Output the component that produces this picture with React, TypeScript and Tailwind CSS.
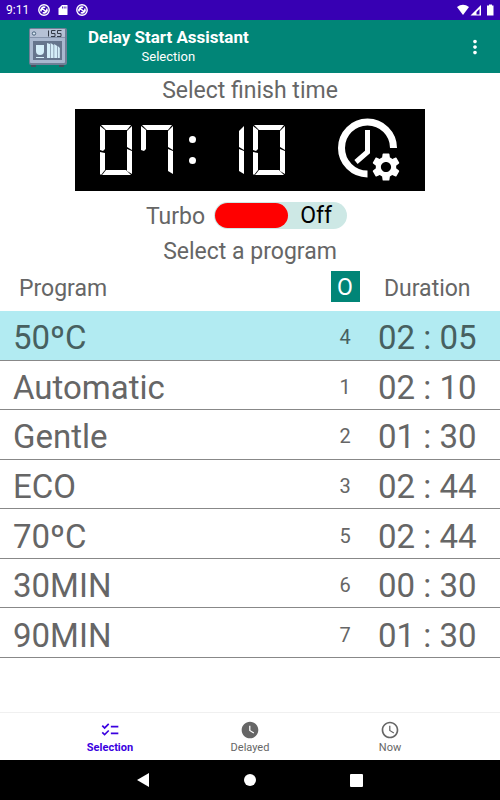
import React, { useState } from 'react';
import { MdSettings, MdChecklist, MdWatchLater, MdAccessTime, MdMoreVert } from 'react-icons/md';

interface Program {
    id: number;
    name: string;
    duration: string;
}

const PROGRAMS: Program[] = [
    { id: 4, name: '50ºC', duration: '02 : 05' },
    { id: 1, name: 'Automatic', duration: '02 : 10' },
    { id: 2, name: 'Gentle', duration: '01 : 30' },
    { id: 3, name: 'ECO', duration: '02 : 44' },
    { id: 5, name: '70ºC', duration: '02 : 44' },
    { id: 6, name: '30MIN', duration: '00 : 30' },
    { id: 7, name: '90MIN', duration: '01 : 30' },
];

const TABS = [
    { label: 'Selection', icon: MdChecklist },
    { label: 'Delayed', icon: MdWatchLater },
    { label: 'Now', icon: MdAccessTime },
];

// Seven segment display: every segment fills the digit cell and is clipped to its own bar
const SEGMENTS: Record<string, string> = {
    a: '[clip-path:polygon(1px_0,31px_0,27px_5px,6px_5px)]',
    b: '[clip-path:polygon(32px_1px,32px_25px,27px_22px,27px_6px)]',
    c: '[clip-path:polygon(32px_26px,32px_49px,27px_46px,27px_24px)]',
    d: '[clip-path:polygon(6px_45px,26px_45px,31px_50px,2px_50px)]',
    e: '[clip-path:polygon(0_27px,5px_28px,5px_45px,1px_50px,0_49px)]',
    f: '[clip-path:polygon(0_1px,5px_5px,5px_24px,3px_26px,0_25px)]',
    g: '[clip-path:polygon(3px_25px,6px_23px,26px_23px,29px_25px,26px_27px,6px_27px)]',
};

const DIGITS: Record<string, string> = {
    '0': 'abcdef', '1': 'bc', '2': 'abged', '3': 'abgcd', '4': 'fgbc',
    '5': 'afgcd', '6': 'afgecd', '7': 'fabc', '8': 'abcdefg', '9': 'abcdfg',
};

const Digit: React.FC<{ value: string }> = ({ value }) => (
    <span className="grid h-[50px] w-8">
        {DIGITS[value].split('').map((s) => (
            <span key={s} className={`col-start-1 row-start-1 bg-white ${SEGMENTS[s]}`} />
        ))}
    </span>
);

const FinishTime: React.FC<{ hours: string; minutes: string }> = ({ hours, minutes }) => (
    <span className="flex items-center" role="img" aria-label={`${hours}:${minutes}`}>
        <span className="flex gap-[9px]">
            {hours.split('').map((d, i) => <Digit key={i} value={d} />)}
        </span>
        <span className="mx-4 flex flex-col gap-[14px]">
            <span className="size-[7px] rounded-full bg-white" />
            <span className="size-[7px] rounded-full bg-white" />
        </span>
        <span className="flex gap-[9px]">
            {minutes.split('').map((d, i) => <Digit key={i} value={d} />)}
        </span>
    </span>
);

const ClockGear: React.FC = () => (
    <svg className="h-[66px] w-[66px]" viewBox="0 0 66 66" fill="none" stroke="#fff" aria-hidden="true">
        <path d="M55.500 31A26 26 0 1 0 29.500 57" strokeWidth="7" />
        <path d="M29.500 13V35L18 45" strokeWidth="5" />
        <MdSettings x="31" y="33" size={34} fill="#fff" stroke="none" />
    </svg>
);

const DishwasherLogo: React.FC = () => (
    <svg className="size-10" viewBox="0 0 40 40" aria-hidden="true">
        <path d="M3 37h5v3H3zM31 37h5v3h-5z" fill="#46505f" />
        <rect x="1" y="1" width="38" height="37" rx="2" fill="#6f7f97" />
        <rect x="2" y="2" width="35" height="34" rx="1" fill="#a9b8cf" />
        <rect x="2" y="2" width="35" height="8" rx="1" fill="#b5c1d5" />
        <path d="M2 10.500h35" stroke="#8594ac" />
        <circle cx="6" cy="6.500" r="1.700" fill="#dcebf5" stroke="#46607a" />
        <rect x="5" y="14" width="29" height="19" fill="#66758d" />
        <path d="M8 18h8v6a4 4 0 0 1-8 0z" fill="#d5eef9" />
        <path d="M8 30.500h8" stroke="#d5eef9" />
        <path d="M19 16l3 1v14h-3zM22.600 16l3 2v13h-3zM26.200 17l3 2v12h-3zM29.800 19l2 2v10h-2z" fill="#d5eef9" />
        <path d="M20.500 3.500v6M23.500 3.500h4M23.500 3.500v3h3.500v3h-4M29.500 3.500h4M29.500 3.500v3h3.500v3h-4" fill="none" stroke="#333b48" />
    </svg>
);

const BlockedIcon: React.FC = () => (
    <svg className="size-3" viewBox="0 0 12 12" fill="none" stroke="#fff" aria-hidden="true">
        <circle cx="6" cy="6" r="5.200" strokeWidth="1.400" />
        <path d="M3.300 7.500a3 3 0 0 1 4-4M8.700 4.500a3 3 0 0 1-4 4M3.500 4l5 4" strokeWidth="1.600" />
    </svg>
);

const StatusBar: React.FC = () => (
    <div className="flex h-5 items-center bg-[#3700b3] px-[6px] text-xs text-white">
        <span>9:11</span>
        <span className="ml-[9px] flex items-center gap-2">
            <BlockedIcon />
            <svg className="h-3 w-[10px]" viewBox="0 0 10 12" fill="#fff" aria-hidden="true">
                <path d="M4 1h5q.5 0 .5.500V10.500q0 .5-.5.500H1q-.5 0-.5-.500V4.500z" />
                <path d="M4.500 2.500v2M6.200 2.500v2M7.900 2.500v2" stroke="#3700b3" strokeWidth="0.800" />
            </svg>
            <BlockedIcon />
        </span>
        <svg className="ml-auto h-3 w-[38px]" viewBox="0 0 38 12" fill="#fff" aria-hidden="true">
            <path d="M1 3Q7-1.500 13 3L7 11z" />
            <path d="M14.500 11.500L25 1V11.500z" />
            <path d="M20.500 8v2.500h3V5z" fill="#3700b3" />
            <path d="M33 .500h3v1h1.500V11.500h-6.500V1.500h2z" />
        </svg>
    </div>
);

const App: React.FC = () => {
    const [turbo, setTurbo] = useState(false);
    const [selected, setSelected] = useState(4);
    const [tab, setTab] = useState('Selection');

    return (
        <div className="flex min-h-screen flex-col bg-white font-[Roboto,sans-serif] text-[#666]">
            <StatusBar />

            <header className="flex h-[53px] items-center bg-[#018577] pl-7 pr-[14px] text-white">
                <DishwasherLogo />
                <div className="ml-5 text-center">
                    <h1 className="text-[17px] leading-5 font-bold">Delay Start Assistant</h1>
                    <p className="text-[13px] leading-5">Selection</p>
                </div>
                <button type="button" aria-label="More options" className="ml-auto">
                    <MdMoreVert size={22} />
                </button>
            </header>

            <main className="flex flex-1 flex-col">
                <h2 className="pt-px text-center text-[23px] leading-[34px]">Select finish time</h2>

                <button
                    type="button"
                    className="mx-auto mt-px flex h-[82px] w-[70%] items-center justify-between bg-black pr-[21px] pl-[25px]"
                >
                    <FinishTime hours="07" minutes="10" />
                    <ClockGear />
                </button>

                <label className="mx-auto mt-[11px] flex h-[27px] items-center gap-[9px] pr-[7px] text-[23px]">
                    <span className="pt-1">Turbo</span>
                    <input
                        type="checkbox"
                        role="switch"
                        className="peer sr-only"
                        checked={turbo}
                        onChange={(e) => setTurbo(e.target.checked)}
                    />
                    <span className={`flex h-[27px] w-[133px] items-center rounded-full bg-[#cde8e5] p-px text-black ${turbo ? 'flex-row-reverse' : ''}`}>
                        <span className={`h-[25px] w-[73px] rounded-full ${turbo ? 'bg-green-500' : 'bg-[#ff0000]'}`} />
                        <span className="flex-1 pr-[2px] text-center leading-[27px]">{turbo ? 'On' : 'Off'}</span>
                    </span>
                </label>

                <h2 className="mt-1 pt-px text-center text-[23px] leading-[35px]">Select a program</h2>

                <table className="h-[389px] w-full text-left">
                    <thead className="text-[23px]">
                        <tr className="h-[42px]">
                            <th scope="col" className="pb-[2px] pl-[19px] font-normal">Program</th>
                            <th scope="col" className="w-[60px] pb-2 text-center font-normal">
                                <button type="button" className="mx-auto block h-[31px] w-[29px] bg-[#018577] pt-px leading-[31px] text-white">O</button>
                            </th>
                            <th scope="col" className="w-[125px] pb-[2px] pl-[9px] font-normal">Duration</th>
                        </tr>
                    </thead>
                    <tbody>
                        {PROGRAMS.map((p) => (
                            <tr
                                key={p.id}
                                onClick={() => setSelected(p.id)}
                                className={`border-b border-[#888] ${selected === p.id ? 'bg-[#b2ebf2] text-[#476060]' : ''}`}
                            >
                                <td className="pt-[6px] pl-[13px] text-[33px] leading-10">{p.name}</td>
                                <td className="pt-1 text-center text-xl">{p.id}</td>
                                <td className="pt-[6px] pl-[3px] text-[33px] leading-10">{p.duration}</td>
                            </tr>
                        ))}
                    </tbody>
                </table>
            </main>

            <nav className="flex h-12 justify-center border-t border-[#f0f0f0]">
                {TABS.map(({ label, icon: Icon }) => (
                    <button
                        key={label}
                        type="button"
                        onClick={() => setTab(label)}
                        className={`flex w-[28%] flex-col items-center pt-[7px] text-[11px] leading-4 ${tab === label ? 'font-bold text-[#3a00e0]' : ''}`}
                    >
                        <Icon size={20} />
                        <span>{label}</span>
                    </button>
                ))}
            </nav>

            <div className="flex h-10 items-center justify-center gap-[94px] bg-black">
                <button type="button" aria-label="Back">
                    <svg className="h-[14px] w-[13px]" viewBox="0 0 13 14" fill="#fff"><path d="M12 0v14L0 7z" /></svg>
                </button>
                <button type="button" aria-label="Home" className="size-3 rounded-full bg-white" />
                <button type="button" aria-label="Recent apps" className="size-[13px] rounded-[1px] bg-white" />
            </div>
        </div>
    );
};

export default App;
